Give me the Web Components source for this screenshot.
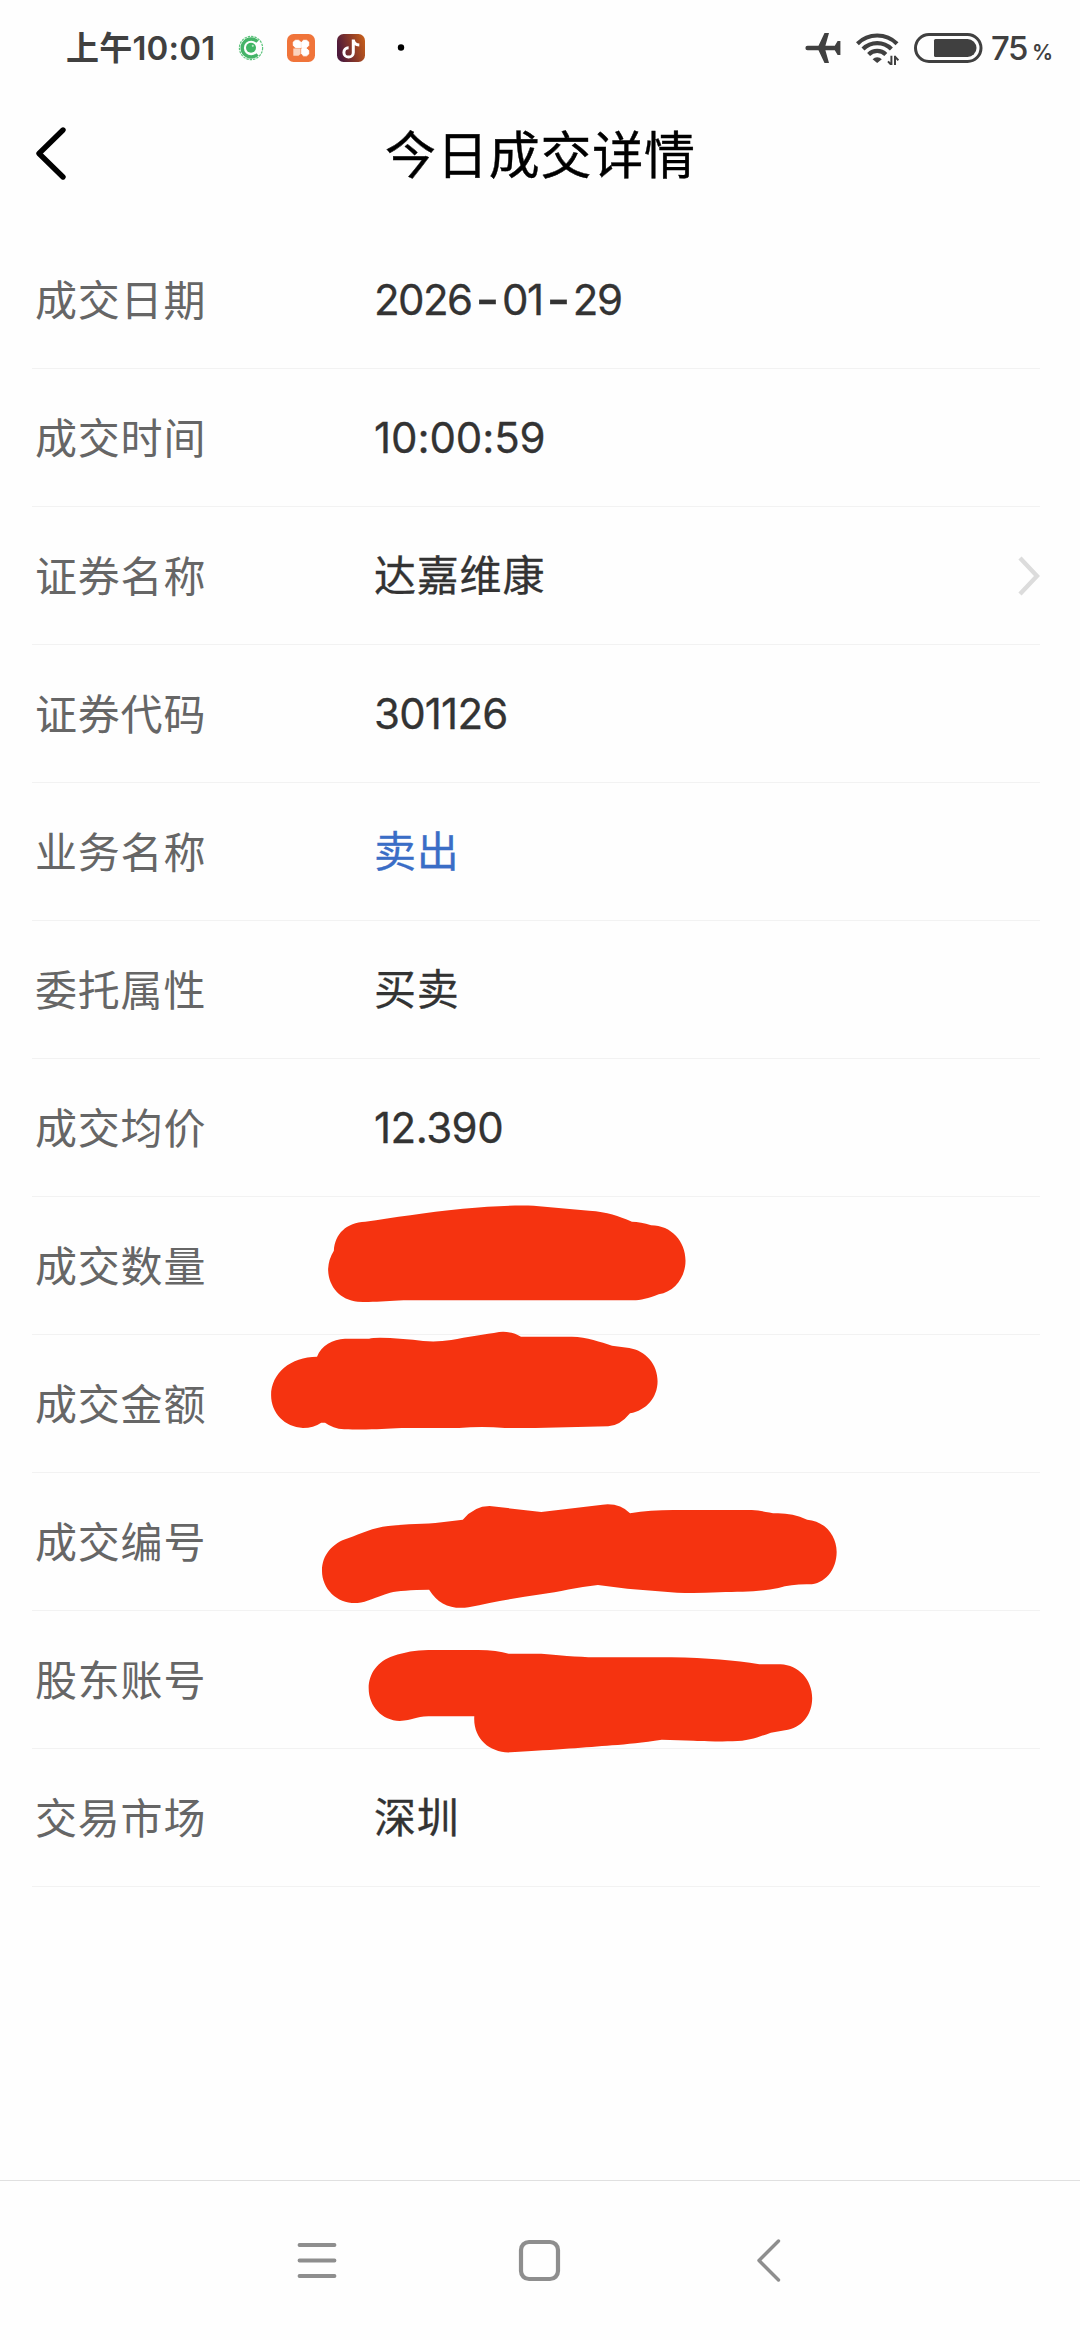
<!DOCTYPE html>
<html lang="zh-CN">
<head>
<meta charset="utf-8">
<title>今日成交详情</title>
<style>
    body {
        margin: 0;
        background: #fefefe;
        font-family: Inter, "Noto Sans CJK SC", sans-serif;
    }

    /* wide dash between the date parts */
    .dash {
        padding: 0 4px;
        font-size: 52px;
        line-height: 0;
        vertical-align: -3px;
    }
</style>
</head>
<body>
<trade-page>
    <status-bar slot="status" time="上午10:01" battery="75"></status-bar>
    <title-bar slot="title">今日成交详情</title-bar>
    <detail-row label="成交日期" style="--spacing: -1.55px">2026<span class="dash">-</span>01<span class="dash">-</span>29</detail-row>
    <detail-row label="成交时间" style="--spacing: -0.1px">10:00:59</detail-row>
    <detail-row label="证券名称" link>达嘉维康</detail-row>
    <detail-row label="证券代码" style="--spacing: -0.8px">301126</detail-row>
    <detail-row label="业务名称" style="--value: #3a6dc6">卖出</detail-row>
    <detail-row label="委托属性">买卖</detail-row>
    <detail-row label="成交均价" style="--spacing: -0.5px">12.390</detail-row>
    <detail-row label="成交数量"><marker-stroke shape="amount"></marker-stroke></detail-row>
    <detail-row label="成交金额"><marker-stroke shape="money"></marker-stroke></detail-row>
    <detail-row label="成交编号"><marker-stroke shape="number"></marker-stroke></detail-row>
    <detail-row label="股东账号"><marker-stroke shape="account"></marker-stroke></detail-row>
    <detail-row label="交易市场">深圳</detail-row>
    <nav-bar slot="nav"></nav-bar>
</trade-page>

<script>
// Base class: every element renders its template once
class BaseElement extends HTMLElement {
    constructor() {
        super();
        this.attachShadow({ mode: 'open' });
    }

    connectedCallback() {
        this.shadowRoot.innerHTML = this.render();
    }
}

class TradePage extends BaseElement {
    render() {
        return `
            <style>
                :host {
                    display: flex;
                    flex-direction: column;
                    width: 1080px;
                    height: 2340px;
                    overflow: hidden;
                }
                main {
                    flex: 1;
                    padding: 0 40px 0 32px;
                }
            </style>
            <slot name="status"></slot>
            <slot name="title"></slot>
            <main><slot></slot></main>
            <slot name="nav"></slot>
        `;
    }
}

class StatusBar extends BaseElement {
    render() {
        return `
            <style>
                :host {
                    display: flex;
                    align-items: center;
                    justify-content: space-between;
                    box-sizing: border-box;
                    height: 96px;
                    padding: 0 30px 0 66px;
                    color: #404040;
                    font-size: 33px;
                    font-weight: 500;
                    line-height: 40px;
                }
                div {
                    display: flex;
                    align-items: center;
                }
                .time {
                    width: 171px;
                    font-weight: 600;
                    letter-spacing: 0.2px;
                    white-space: nowrap;
                }
                .apps svg {
                    margin-right: 22px;
                }
                .level {
                    margin-left: 8px;
                    width: 41px;
                    letter-spacing: -1.5px;
                }
                .percent {
                    font-size: 21px;
                    font-weight: 600;
                    width: 18px;
                    padding-top: 9px;
                }
                svg {
                    display: block;
                }
            </style>
            <div class="apps">
                <span class="time">${this.getAttribute('time')}</span>
                <svg width="28" height="28" viewBox="0 0 28 28" fill="none">
                    <circle cx="14" cy="14" r="11.6" stroke="#5cc47c" stroke-width="1.2" stroke-dasharray="2.4 1"/>
                    <path d="M20.5 7.6A9 9 0 1 0 20.5 20.4" stroke="#45b468" stroke-width="3.4"/>
                    <circle cx="14" cy="13.8" r="5" fill="#41b565"/>
                    <circle cx="15.8" cy="11.8" r="1.1" fill="#b6e6c4"/>
                </svg>
                <svg width="28" height="28" viewBox="0 0 28 28">
                    <rect width="28" height="28" rx="6.5" fill="#f0743a"/>
                    <path d="M8.5 6.3H11.5L13.7 8V13.7H8.5L6.3 11.5V8Z" fill="#fff" stroke="#fff" stroke-linejoin="round"/>
                    <path d="M19.5 6.3H16.5L14.7 8V13.7H19.5L21.7 11.5V8Z" fill="#fff" stroke="#fff" stroke-linejoin="round"/>
                    <path d="M6.3 14.6H13.6V20L11.5 21.8H6.3Z" fill="#fbd3bd"/>
                    <path d="M14.7 14.6H19.5L21.7 16.5V20L19.5 21.8H16.5L14.7 20Z" fill="#fff" stroke="#fff" stroke-linejoin="round"/>
                </svg>
                <svg width="28" height="28" viewBox="0 0 28 28">
                    <linearGradient id="g" x1="0" y1=".4" x2="1" y2=".1">
                        <stop stop-color="#4d1a3c"/>
                        <stop offset=".5" stop-color="#8c3a28"/>
                        <stop offset="1" stop-color="#c9601a"/>
                    </linearGradient>
                    <rect width="28" height="28" rx="6.5" fill="url(#g)"/>
                    <path d="M16.3 5.4v13a4.7 4.7 0 1 1-4.7-4.7M16.3 6c.5 3.2 2.8 4.8 6 5" fill="none" stroke="#fff" stroke-width="3"/>
                </svg>
                <svg width="28" height="28" viewBox="0 0 28 28"><circle cx="14" cy="13.5" r="3.2" fill="#000"/></svg>
            </div>
            <div>
                <svg width="36" height="30" viewBox="0 0 36 30" fill="#404040">
                    <path d="M2.6 12.8H13.5L19.5 0H24L20.4 12.8H29.8L32.6 8H35.4V22H32.6L29.8 17.2H20.4L24 30H19.5L13.5 17.2H2.6A2.2 2.2 0 0 1 2.6 12.8Z"/>
                </svg>
                <svg style="margin-left:15px" width="43" height="34" viewBox="0 -2 43 34" fill="none" stroke="#404040" stroke-width="4.2">
                    <path d="M1.4 10.7A28 28 0 0 1 41 10.7"/>
                    <path d="M7 16A20 20 0 0 1 35.4 16"/>
                    <path d="M12.6 21.4A12.3 12.3 0 0 1 29.8 21.4"/>
                    <path d="M16.6 26.2A6.5 6.5 0 0 1 25.8 26.2L21.2 30Z" fill="#404040" stroke="none"/>
                    <path d="M35.4 22.8V32M35.4 32L32 28.4M39 32V22.8M39 23.6L42.4 27.2" stroke-width="2"/>
                </svg>
                <svg style="margin-left:15px" width="69" height="30" viewBox="0 0 69 30">
                    <rect x="1.5" y="1.5" width="65.5" height="27" rx="13.5" fill="none" stroke="#404040" stroke-width="3"/>
                    <path d="M21.5 6H53.5A9 9 0 0 1 53.5 24H21.5A1.5 1.5 0 0 1 20 22.5V7.5A1.5 1.5 0 0 1 21.5 6Z" fill="#404040"/>
                </svg>
                <span class="level">${this.getAttribute('battery')}</span>
                <span class="percent">%</span>
            </div>
        `;
    }
}

class TitleBar extends BaseElement {
    render() {
        return `
            <style>
                :host {
                    display: grid;
                    grid-template-columns: 100px 1fr 100px;
                    align-items: center;
                    height: 116px;
                    margin-bottom: 19px;
                    color: #000;
                    font-size: 51px;
                    line-height: 60px;
                    letter-spacing: 0.8px;
                    text-align: center;
                }
                svg {
                    margin-left: 34px;
                }
                span {
                    padding-top: 3px;
                    padding-left: 1px;
                    -webkit-text-stroke: 0.4px;
                }
            </style>
            <svg width="34" height="60" viewBox="0 0 34 60">
                <path d="M29 6L5 29.5L29 53" fill="none" stroke="#000" stroke-width="5.4" stroke-linecap="round" stroke-linejoin="round"/>
            </svg>
            <span><slot></slot></span>
        `;
    }
}

class DetailRow extends BaseElement {
    render() {
        const arrow = `
            <svg width="24" height="44" viewBox="0 0 24 44">
                <path d="M4 4L21 22L4 40" fill="none" stroke="#dcdcdc" stroke-width="4.4"/>
            </svg>`;
        return `
            <style>
                :host {
                    display: flex;
                    align-items: center;
                    position: relative;
                    box-sizing: border-box;
                    height: 138px;
                    padding-left: 3px;
                    border-bottom: 1px solid #f2f2f2;
                    font-size: 42px;
                    line-height: 60px;
                }
                .label {
                    width: 339px;
                    padding-top: 2px;
                    color: #666;
                    letter-spacing: 0.8px;
                }
                .value {
                    flex: 1;
                    padding-top: 1px;
                    color: var(--value, #333);
                    letter-spacing: var(--spacing, 0.8px);
                    -webkit-text-stroke: 0.3px;
                }
            </style>
            <span class="label">${this.getAttribute('label')}</span>
            <span class="value"><slot></slot></span>
            ${this.hasAttribute('link') ? arrow : ''}
        `;
    }
}

// Red marker scribbles that hide a value
const SHAPES = {
    amount: {
        top: 51,
        d: 'M193 212C196 160 226 128 275 125C350 113 430 97 530 86C600 79 660 75 715 77L860 92C910 96 935 107 972 125Q995 125 1022 136C1075 136 1112 185 1112 242C1112 290 1085 335 1042 343C1015 355 995 361 975 361H375C330 364 300 367 255 365C210 360 178 320 178 267Q179 238 193 212Z',
    },
    money: {
        top: 465,
        d: 'M149 530C160 497 190 477 222 476H285Q300 471 340 474L400 479Q450 489 500 480C540 471 590 463 625 456Q660 453 682 470H815C855 471 890 486 920 497L965 504C1008 512 1039 553 1039 604C1039 652 1010 692 967 700Q940 738 910 739L720 744H640Q580 738 520 744H370C320 746 300 750 220 748Q190 745 170 728H160Q140 744 112 744C65 741 29 700 29 646C29 580 80 530 149 530Z',
    },
    number: {
        top: 39,
        d: 'M230 235C265 220 295 203 335 198C385 191 430 194 475 187L530 179Q560 138 600 138L735 156L895 134Q940 128 967 160Q1020 150 1080 150H1285C1310 151 1330 159 1350 160Q1390 159 1430 179C1475 183 1507 225 1507 276C1507 330 1475 373 1435 373Q1390 372 1355 384C1300 397 1260 395 1200 397Q1140 400 1090 398L960 386L883 375C830 381 780 396 735 403C670 413 610 426 545 442C500 449 465 433 442 389Q370 390 340 398C300 412 280 426 255 429C205 433 162 390 162 332C162 285 190 249 230 235Z',
    },
    account: {
        top: 453,
        d: 'M348 588C380 576 405 571 440 570H570Q620 571 650 581H735C800 588 850 592 890 592H1075C1170 594 1240 601 1305 613H1360C1408 615 1443 660 1443 714C1443 765 1415 805 1372 811L1335 818C1300 832 1280 843 1235 844C1180 846 1120 841 1050 839C1000 848 960 852 920 856C850 863 780 869 655 877C600 880 556 835 560 769H440C405 769 400 782 365 783C320 782 284 740 284 685C284 640 308 603 348 588Z',
    },
};

class MarkerStroke extends BaseElement {
    render() {
        const shape = SHAPES[this.getAttribute('shape')];
        return `
            <style>
                :host {
                    position: absolute;
                    left: 228px;
                    top: 0;
                }
                svg {
                    display: block;
                    overflow: visible;
                }
            </style>
            <svg width="600" height="138" viewBox="0 ${shape.top} 1568 414" preserveAspectRatio="none">
                <path d="${shape.d}" fill="#f53310"/>
            </svg>
        `;
    }
}

class NavBar extends BaseElement {
    render() {
        return `
            <style>
                :host {
                    display: flex;
                    align-items: center;
                    box-sizing: border-box;
                    height: 160px;
                    padding-left: 292px;
                    gap: 172px;
                    border-top: 1px solid #e0e0e0;
                }
            </style>
            <svg width="50" height="50" viewBox="0 0 50 50" stroke="#8e8e8e" stroke-width="3.8" stroke-linecap="round">
                <path d="M7.5 9H42.5M7.5 24.5H42.5M7.5 40H42.5"/>
            </svg>
            <svg width="50" height="50" viewBox="0 0 50 50" fill="none" stroke="#8e8e8e" stroke-width="4.2">
                <rect x="7" y="6" width="37" height="37" rx="8"/>
            </svg>
            <svg width="50" height="50" viewBox="0 0 50 50" fill="none" stroke="#8e8e8e" stroke-width="3.4">
                <path d="M42.5 5L23 24.5L42.5 44" stroke-linecap="round" stroke-linejoin="round"/>
            </svg>
        `;
    }
}

customElements.define('trade-page', TradePage);
customElements.define('status-bar', StatusBar);
customElements.define('title-bar', TitleBar);
customElements.define('detail-row', DetailRow);
customElements.define('marker-stroke', MarkerStroke);
customElements.define('nav-bar', NavBar);
</script>
</body>
</html>
